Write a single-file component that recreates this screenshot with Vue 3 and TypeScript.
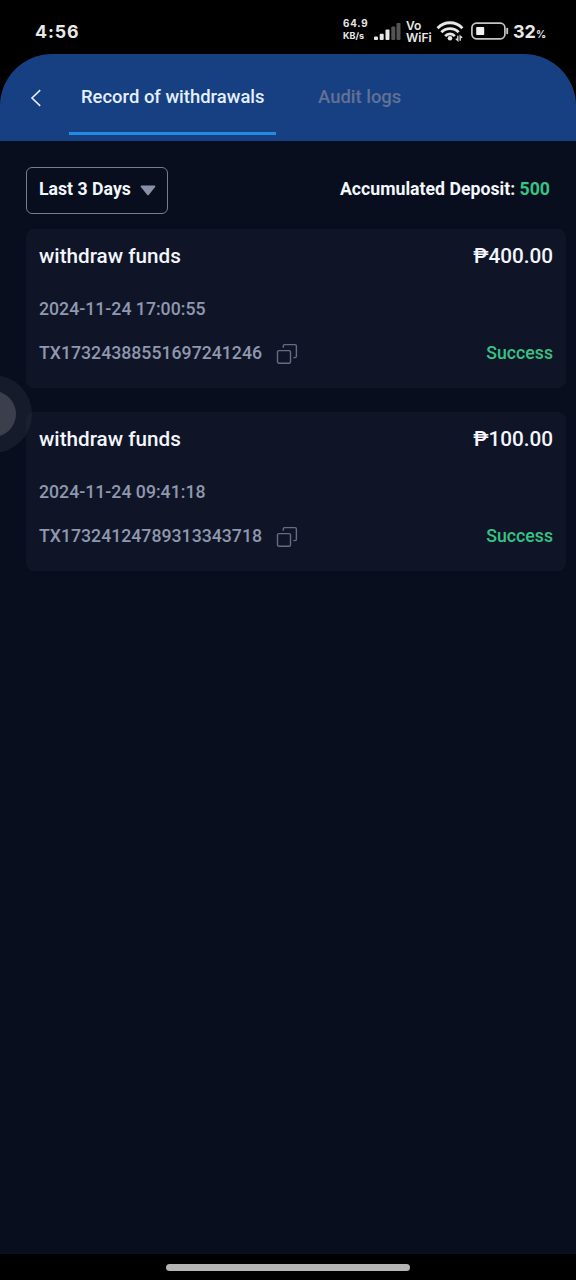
<script setup lang="ts">
interface WithdrawalRecord {
  title: string
  amount: string
  time: string
  tx: string
  status: string
}

const records: WithdrawalRecord[] = [
  {
    title: 'withdraw funds',
    amount: '₱400.00',
    time: '2024-11-24 17:00:55',
    tx: 'TX17324388551697241246',
    status: 'Success',
  },
  {
    title: 'withdraw funds',
    amount: '₱100.00',
    time: '2024-11-24 09:41:18',
    tx: 'TX17324124789313343718',
    status: 'Success',
  },
]
</script>

<template>
  <div class="phone">
    <div class="status-bar">
      <span class="clock">4:56</span>
      <div class="indicators">
        <div class="speed">
          <span class="speed-value">64.9</span>
          <span class="speed-unit">KB/s</span>
        </div>
        <svg class="signal" width="28" height="19" viewBox="0 0 28 19">
          <g fill="#e8e8e8">
            <rect x="0" y="14.5" width="4" height="3.5" rx="1" />
            <rect x="5.7" y="11.8" width="4" height="6.2" rx="1" />
            <rect x="11.5" y="7.5" width="4" height="10.5" rx="1" />
          </g>
          <g fill="#545454">
            <rect x="17.3" y="4.5" width="4" height="13.5" rx="1" />
            <rect x="22.5" y="1" width="4" height="17" rx="1" />
          </g>
        </svg>
        <div class="vowifi">
          <span>Vo</span>
          <span>WiFi</span>
        </div>
        <svg class="wifi" width="28" height="22" viewBox="0 0 28 22">
          <g fill="none" stroke="#e8e8e8" stroke-width="2.8">
            <path d="M1.6 8.2C8.4 0.9 19.6 0.9 26.4 8.2" />
            <path d="M5.4 12.3C10 7.3 18 7.3 22.6 12.3" />
            <path d="M9.2 16.1C11.8 13.2 16.2 13.2 18.8 16.1" />
          </g>
          <circle cx="14" cy="18.2" r="2.3" fill="#e8e8e8" />
          <path d="M21.8 15.8V20.5L19.8 18.8M24.2 20.8V16.2L26.2 17.8" fill="none" stroke="#d8d8d8" stroke-width="1.4" />
        </svg>
        <svg class="battery" width="38" height="18" viewBox="0 0 38 18">
          <rect x="0.9" y="1.2" width="33" height="15.6" rx="4.5" fill="none" stroke="#c4c4c4" stroke-width="1.7" />
          <rect x="5.2" y="5" width="8" height="8" rx="0.8" fill="#f0f0f0" />
          <path d="M36.2 6.8V11.2" stroke="#c4c4c4" stroke-width="1.9" stroke-linecap="round" />
        </svg>
        <span class="percent">32<small>%</small></span>
      </div>
    </div>

    <header class="tabs">
      <svg class="back" width="14" height="20" viewBox="0 0 14 20">
        <path d="M11.2 2.2L3 10L11.2 17.8" fill="none" stroke="#e6eefb" stroke-width="1.6" />
      </svg>
      <div class="tab active">Record of withdrawals</div>
      <div class="tab">Audit logs</div>
    </header>

    <main class="content">
      <div class="filter-row">
        <div class="select">
          <span>Last 3 Days</span>
          <svg width="16" height="11" viewBox="0 0 16 11">
            <path d="M1.3 0.5H14.7Q16 0.7 15.1 1.9L8.9 9.8Q8 10.8 7.1 9.8L0.9 1.9Q0 0.7 1.3 0.5Z" fill="#8991a8" />
          </svg>
        </div>
        <div class="deposit">Accumulated Deposit: <b>500</b></div>
      </div>

      <section v-for="record in records" :key="record.tx" class="card">
        <div class="line title-line">
          <span>{{ record.title }}</span>
          <span class="amount">{{ record.amount }}</span>
        </div>
        <div class="line time"><span>{{ record.time }}</span></div>
        <div class="line tx-line">
          <span class="tx">{{ record.tx }}</span>
          <svg class="copy" width="22" height="22" viewBox="0 0 22 22">
            <g fill="none" stroke="#666d80" stroke-width="1.4">
              <rect x="1.5" y="7.6" width="13" height="12.7" rx="1.5" />
              <path d="M7.3 4.8V3Q7.3 1.6 8.7 1.6H19Q20.4 1.6 20.4 3V13.2Q20.4 14.6 19 14.6H17.4" />
            </g>
          </svg>
          <span class="status">{{ record.status }}</span>
        </div>
      </section>
    </main>

    <div class="assist"><i></i></div>
    <footer class="nav-bar"><i></i></footer>
  </div>
</template>

<style>
body {
  margin: 0;
  background: #000;
}
</style>

<style scoped>
.phone {
  position: relative;
  width: 576px;
  height: 1280px;
  display: flex;
  flex-direction: column;
  overflow: hidden;
  background: #000;
  color: #f3f6fc;
  font-family: Roboto, "Liberation Sans", sans-serif;
  font-weight: 500;
}

.status-bar {
  height: 54px;
  box-sizing: border-box;
  flex: none;
  display: flex;
  align-items: flex-start;
  justify-content: space-between;
  padding: 20px 30px 0 35px;
  color: #e8e8e8;
  font-family: Inter, sans-serif;
}

.clock {
  font-size: 17.8px;
  line-height: 24px;
  font-weight: 700;
  letter-spacing: 0.9px;
}

.indicators {
  display: flex;
  height: 24px;
}

.speed {
  width: 31px;
  display: flex;
  flex-direction: column;
  margin-top: -2px;
  font-weight: 700;
  line-height: 12px;
}

.speed-value {
  font-size: 9.8px;
  letter-spacing: 0.8px;
}

.speed-unit {
  font-size: 9px;
}

.signal {
  margin-top: 2px;
}

.vowifi {
  width: 26px;
  display: flex;
  flex-direction: column;
  margin: -2px 0 0 4px;
  font-size: 12px;
  line-height: 15px;
  font-weight: 600;
}

.vowifi span + span {
  margin-top: -3px;
}

.wifi {
  margin-left: 4px;
}

.battery {
  margin: 2px 0 0 7px;
}

.percent {
  width: 33px;
  margin-left: 4px;
  font-size: 18px;
  line-height: 24px;
  font-weight: 700;
  white-space: nowrap;
}

.percent small {
  font-size: 10px;
}

.tabs {
  height: 87px;
  flex: none;
  display: flex;
  box-sizing: border-box;
  padding-left: 29px;
  border-radius: 52px 52px 0 0;
  background: #164082;
}

.back {
  margin: 34px 26px 0 0;
}

.tab {
  height: 81px;
  box-sizing: border-box;
  padding: 32px 12px 0;
  font-size: 18.45px;
  line-height: 22px;
  color: #627194;
  white-space: nowrap;
}

.tab + .tab {
  margin-left: 30px;
}

.tab.active {
  width: 207px;
  color: #e4efff;
  border-bottom: 3px solid #248ce0;
}

.content {
  flex: 1;
  padding: 25px 10px 0 26px;
  background: #080e1d;
}

.filter-row {
  display: flex;
  align-items: center;
  justify-content: space-between;
  height: 48px;
  padding-right: 16px;
  margin-bottom: 15px;
  font-size: 17.7px;
}

.select {
  width: 142px;
  height: 47px;
  box-sizing: border-box;
  display: flex;
  align-items: center;
  justify-content: space-between;
  padding: 0 11px 0 12px;
  border: 1.5px solid #777d90;
  border-radius: 6px;
  font-weight: 700;
  white-space: nowrap;
}

.select span {
  padding-bottom: 2px;
}

.deposit {
  padding-bottom: 2px;
  font-weight: 700;
}

.deposit b {
  font-weight: 700;
  color: #35c483;
}

.card {
  height: 159px;
  box-sizing: border-box;
  margin-bottom: 24px;
  padding: 14px 13px 0;
  border-radius: 8px;
  background: #0f1527;
}

.line {
  display: flex;
  align-items: center;
  height: 26px;
  font-size: 17.7px;
  color: #8f98af;
}

.title-line {
  justify-content: space-between;
  font-size: 20.7px;
  color: #f3f6fc;
}

.time {
  margin-top: 26px;
}

.time span,
.tx,
.status {
  padding-top: 1px;
}

.tx-line {
  margin-top: 18px;
}

.copy {
  margin: 3px 0 0 14px;
}

.status {
  margin-left: auto;
  color: #35c483;
}

.assist {
  position: absolute;
  left: -46px;
  top: 375px;
  width: 78px;
  height: 78px;
  border-radius: 50%;
  background: rgba(46, 49, 62, 0.38);
}

.assist i {
  position: absolute;
  left: 16px;
  top: 16px;
  width: 46px;
  height: 46px;
  border-radius: 50%;
  background: #3b3f4b;
}

.nav-bar {
  height: 26px;
  flex: none;
  display: flex;
  justify-content: center;
  background: #000;
}

.nav-bar i {
  width: 244px;
  height: 7px;
  margin-top: 10px;
  border-radius: 4px;
  background: #b5b5b5;
}
</style>
